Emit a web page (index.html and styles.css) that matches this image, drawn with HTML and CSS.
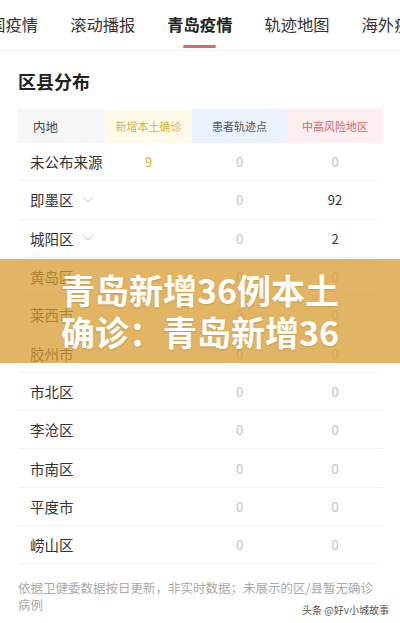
FILE: index.html
```html
<!DOCTYPE html>
<html lang="zh-CN">
<head>
    <meta charset="UTF-8">
    <meta name="viewport" content="width=device-width, initial-scale=1.0">
    <title>青岛疫情 - 区县分布</title>
    <link rel="stylesheet" href="styles.css">
</head>
<body>
    <!-- Tabs -->
    <div class="tabs">
        <div class="tab-list">
            <div class="tab">全国疫情</div>
            <div class="tab">滚动播报</div>
            <div class="tab active">青岛疫情<span class="underline"></span></div>
            <div class="tab">轨迹地图</div>
            <div class="tab">海外疫情</div>
        </div>
    </div>

    <!-- District table -->
    <div class="section">
        <h2 class="title">区县分布</h2>
        <div class="table">
            <div class="row head">
                <div class="cell name-head">内地</div>
                <div class="cell new">新增本土确诊</div>
                <div class="cell track">患者轨迹点</div>
                <div class="cell risk">中高风险地区</div>
            </div>
            <div id="rows"></div>
        </div>
        <p class="note">依据卫健委数据按日更新，非实时数据；未展示的区/县暂无确诊病例</p>
    </div>

    <!-- Headline banner -->
    <div class="banner">
        <div class="banner-text">青岛新增36例本土确诊：青岛新增36</div>
    </div>

    <div class="watermark">头条 @好v小城故事</div>

    <script>
        const districts = [
            { name: "未公布来源", fold: false, add: "9", track: "0", risk: "0" },
            { name: "即墨区", fold: true, add: "", track: "0", risk: "92" },
            { name: "城阳区", fold: true, add: "", track: "0", risk: "2" },
            { name: "黄岛区", fold: false, add: "", track: "0", risk: "0" },
            { name: "莱西市", fold: false, add: "", track: "0", risk: "0" },
            { name: "胶州市", fold: false, add: "", track: "0", risk: "0" },
            { name: "市北区", fold: false, add: "", track: "0", risk: "0" },
            { name: "李沧区", fold: false, add: "", track: "0", risk: "0" },
            { name: "市南区", fold: false, add: "", track: "0", risk: "0" },
            { name: "平度市", fold: false, add: "", track: "0", risk: "0" },
            { name: "崂山区", fold: false, add: "", track: "0", risk: "0" }
        ];

        const chevron = '<svg class="chevron" width="10" height="6" viewBox="0 0 10 6"><polyline points="0.5,0.5 5,5 9.5,0.5" fill="none" stroke="#c4c4c4" stroke-width="1"/></svg>';

        function valueClass(v) {
            return v === "0" ? "val zero" : "val dark";
        }

        let html = "";
        districts.forEach(d => {
            html += `<div class="row">
                        <div class="cell name">${d.name}${d.fold ? chevron : ""}</div>
                        <div class="cell val add">${d.add}</div>
                        <div class="cell ${valueClass(d.track)}">${d.track}</div>
                        <div class="cell ${valueClass(d.risk)}">${d.risk}</div>
                     </div>`;
        });
        document.getElementById("rows").innerHTML = html;
    </script>
</body>
</html>
```

FILE: styles.css
```css
body {
    font-family: "Noto Sans CJK SC", "Noto Sans", sans-serif;
    background-color: #fff;
    color: #333;
    margin: 0;
    padding: 0;
    width: 400px;
    height: 623px;
    overflow: hidden;
}
.tabs {
    height: 50px;
    border-bottom: 1px solid #f1f1f1;
    overflow: hidden;
}
.tab-list {
    display: flex;
    gap: 32px;
    margin-left: -27px;
    white-space: nowrap;
}
.tab {
    display: flex;
    flex-direction: column;
    align-items: center;
    padding-top: 12px;
    font-size: 16.3px;
    line-height: 24px;
    color: #333;
}
.tab.active {
    font-weight: bold;
    color: #222;
}
.underline {
    width: 33px;
    height: 3px;
    margin-top: 9px;
    border-radius: 2px;
    background-color: #d9666a;
}
.section {
    padding: 0 17px 0 18px;
}
.title {
    margin: 17px 0 15px;
    font-size: 18px;
    line-height: 26px;
    font-weight: bold;
    color: #222;
}
.row {
    display: grid;
    grid-template-columns: 87px 87px 95px 96px;
    height: 38.3px;
    border-bottom: 1px solid #f3f3f3;
    box-sizing: border-box;
}
.row.head {
    height: 34px;
    border-bottom: none;
}
.cell {
    display: flex;
    align-items: center;
    justify-content: center;
    white-space: nowrap;
}
.head .cell {
    font-size: 11px;
}
.name-head {
    justify-content: flex-start;
    padding-left: 15px;
    background-color: #f6f6f6;
    color: #444;
    font-size: 12.5px !important;
}
.new {
    background-color: #fffbea;
    color: #d8b04c;
}
.track {
    background-color: #e9f2fd;
    color: #555;
}
.risk {
    background-color: #fdefef;
    color: #cf6a62;
}
.name {
    justify-content: flex-start;
    padding-left: 12px;
    font-size: 14.5px;
    color: #333;
}
.chevron {
    margin-left: 9px;
}
.val {
    font-size: 13px;
}
.val.add {
    color: #dcae2c;
}
.val.zero {
    color: #c2c2c2;
}
.val.dark {
    color: #333;
}
.note {
    margin: 15px 0 0;
    font-size: 12.5px;
    line-height: 17px;
    color: #aaa;
}
.banner {
    position: absolute;
    left: 0;
    top: 259px;
    width: 400px;
    height: 104px;
    background-color: rgba(216, 156, 50, 0.75);
}
.banner-text {
    width: 292px;
    margin: 0 auto;
    padding-top: 10px;
    font-size: 34px;
    line-height: 42px;
    font-weight: bold;
    color: #fff;
    text-align: center;
    text-shadow: 0 1px 2px rgba(120, 80, 20, 0.25);
}
.watermark {
    position: absolute;
    left: 302px;
    top: 602px;
    font-size: 10px;
    color: #555;
    text-shadow: 0 0 2px #fff, 0 0 2px #fff;
    white-space: nowrap;
}
```
